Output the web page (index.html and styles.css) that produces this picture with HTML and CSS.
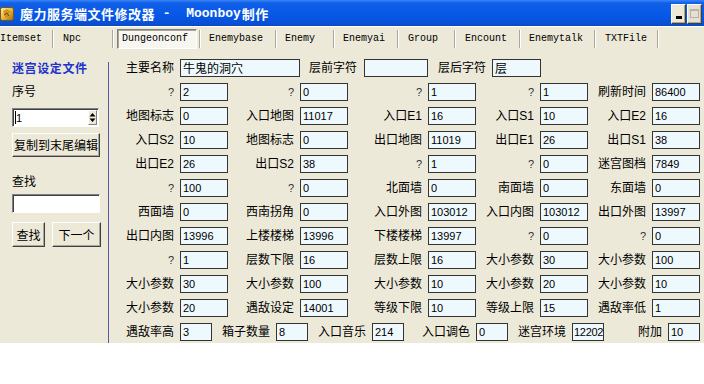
FILE: index.html
```html
<!DOCTYPE html>
<html>
<head>
<meta charset="utf-8">
<link rel="stylesheet" href="styles.css">
</head>
<body>
<div class="window">
  <div class="titlebar">
    <svg class="app-icon" width="14" height="15" viewBox="0 0 14 15">
      <defs>
        <linearGradient id="g" x1="0" y1="0" x2="1" y2="1">
          <stop offset="0" stop-color="#fff2a8"/>
          <stop offset="0.5" stop-color="#e6b83a"/>
          <stop offset="1" stop-color="#9a6a12"/>
        </linearGradient>
      </defs>
      <rect x="0.5" y="1.5" width="13" height="13" rx="2" fill="url(#g)" stroke="#7a5410"/>
      <path d="M3 5 L7 3 L11 6 L8 8 L10 12 L5 11 Z" fill="#c98a1c" opacity="0.8"/>
      <path d="M4 9 L7 7 L9 10" stroke="#6b4a0c" stroke-width="1" fill="none"/>
    </svg>
    <div class="title"><span class="cn">魔力服务端文件修改器</span><span class="mono"> -  Moonboy</span><span class="cn">制作</span></div>
    <div class="controls">
      <div class="ctl"><span class="min-bar"></span></div>
      <div class="ctl disabled"><span class="max-box"></span></div>
    </div>
  </div>

  <div class="tabs">
    <div class="tab t-itemset">Itemset</div><div class="sep"></div>
    <div class="tab t-npc">Npc</div><div class="sep"></div>
    <div class="tab t-dungeon"><div class="tab-active">Dungeonconf</div></div><div class="sep"></div>
    <div class="tab t-enemybase">Enemybase</div><div class="sep"></div>
    <div class="tab t-enemy">Enemy</div><div class="sep"></div>
    <div class="tab t-enemyai">Enemyai</div><div class="sep"></div>
    <div class="tab t-group">Group</div><div class="sep"></div>
    <div class="tab t-encount">Encount</div><div class="sep"></div>
    <div class="tab t-enemytalk">Enemytalk</div><div class="sep"></div>
    <div class="tab t-txt">TXTFile</div><div class="sep"></div>
  </div>

  <div class="content">
    <aside class="side">
      <div class="side-title">迷宫设定文件</div>
      <div class="side-label">序号</div>
      <div class="spin">
        <span class="spin-text"><span class="caret"></span>1</span>
        <span class="spin-btn">
          <svg width="7" height="11" viewBox="0 0 7 11"><polygon points="0.5,4.5 3.5,1 6.5,4.5" fill="#000"/><polygon points="0.5,6.5 3.5,10 6.5,6.5" fill="#000"/></svg>
        </span>
      </div>
      <button class="btn btn-wide">复制到末尾编辑</button>
      <div class="side-label find-label">查找</div>
      <div class="find-input"></div>
      <div class="btn-row">
        <button class="btn btn-find">查找</button>
        <button class="btn btn-next">下一个</button>
      </div>
    </aside>
    <div class="divider"></div>
    <main class="form">
      <div class="row-top">
        <span class="lbl lbl-first">主要名称</span>
        <span class="fld fld-name">牛鬼的洞穴</span>
        <span class="lbl lbl-pre">层前字符</span>
        <span class="fld fld-pre"></span>
        <span class="lbl lbl-post">层后字符</span>
        <span class="fld fld-post">层</span>
      </div>

      <div class="grid">
        <span class="lbl q">?</span><span class="fld">2</span>
        <span class="lbl q">?</span><span class="fld">0</span>
        <span class="lbl q">?</span><span class="fld">1</span>
        <span class="lbl q">?</span><span class="fld">1</span>
        <span class="lbl">刷新时间</span><span class="fld">86400</span>

        <span class="lbl">地图标志</span><span class="fld">0</span>
        <span class="lbl">入口地图</span><span class="fld">11017</span>
        <span class="lbl">入口E1</span><span class="fld">16</span>
        <span class="lbl">入口S1</span><span class="fld">10</span>
        <span class="lbl">入口E2</span><span class="fld">16</span>

        <span class="lbl">入口S2</span><span class="fld">10</span>
        <span class="lbl">地图标志</span><span class="fld">0</span>
        <span class="lbl">出口地图</span><span class="fld">11019</span>
        <span class="lbl">出口E1</span><span class="fld">26</span>
        <span class="lbl">出口S1</span><span class="fld">38</span>

        <span class="lbl">出口E2</span><span class="fld">26</span>
        <span class="lbl">出口S2</span><span class="fld">38</span>
        <span class="lbl q">?</span><span class="fld">1</span>
        <span class="lbl q">?</span><span class="fld">0</span>
        <span class="lbl">迷宫图档</span><span class="fld">7849</span>

        <span class="lbl q">?</span><span class="fld">100</span>
        <span class="lbl q">?</span><span class="fld">0</span>
        <span class="lbl">北面墙</span><span class="fld">0</span>
        <span class="lbl">南面墙</span><span class="fld">0</span>
        <span class="lbl">东面墙</span><span class="fld">0</span>

        <span class="lbl">西面墙</span><span class="fld">0</span>
        <span class="lbl">西南拐角</span><span class="fld">0</span>
        <span class="lbl">入口外图</span><span class="fld">103012</span>
        <span class="lbl">入口内图</span><span class="fld">103012</span>
        <span class="lbl">出口外图</span><span class="fld">13997</span>

        <span class="lbl">出口内图</span><span class="fld">13996</span>
        <span class="lbl">上楼楼梯</span><span class="fld">13996</span>
        <span class="lbl">下楼楼梯</span><span class="fld">13997</span>
        <span class="lbl q">?</span><span class="fld">0</span>
        <span class="lbl q">?</span><span class="fld">0</span>

        <span class="lbl q">?</span><span class="fld">1</span>
        <span class="lbl">层数下限</span><span class="fld">16</span>
        <span class="lbl">层数上限</span><span class="fld">16</span>
        <span class="lbl">大小参数</span><span class="fld">30</span>
        <span class="lbl">大小参数</span><span class="fld">100</span>

        <span class="lbl">大小参数</span><span class="fld">30</span>
        <span class="lbl">大小参数</span><span class="fld">100</span>
        <span class="lbl">大小参数</span><span class="fld">10</span>
        <span class="lbl">大小参数</span><span class="fld">20</span>
        <span class="lbl">大小参数</span><span class="fld">10</span>

        <span class="lbl">大小参数</span><span class="fld">20</span>
        <span class="lbl">遇敌设定</span><span class="fld">14001</span>
        <span class="lbl">等级下限</span><span class="fld">10</span>
        <span class="lbl">等级上限</span><span class="fld">15</span>
        <span class="lbl">遇敌率低</span><span class="fld">1</span>
      </div>

      <div class="row-bottom">
        <span class="lbl">遇敌率高</span><span class="fld">3</span>
        <span class="lbl">箱子数量</span><span class="fld">8</span>
        <span class="lbl">入口音乐</span><span class="fld">214</span>
        <span class="lbl">入口调色</span><span class="fld">0</span>
        <span class="lbl">迷宫环境</span><span class="fld fld-tight">12202</span>
        <span class="lbl">附加</span><span class="fld">10</span>
      </div>
    </main>
  </div>
</div>
</body>
</html>
```

FILE: styles.css
```css
* { box-sizing: border-box; }

body {
  margin: 0;
  background: #ffffff;
  font-family: "Liberation Sans", "Noto Sans CJK SC", sans-serif;
  font-size: 12px;
  color: #000;
}

.window {
  width: 704px;
  height: 343px;
  background: #ece9d8;
  display: flex;
  flex-direction: column;
}

/* Title bar */
.titlebar {
  height: 26px;
  background: linear-gradient(#3d86f8 0, #0f5fe9 3px, #0556e4 18px, #0a4fd2 24px, #0846bd 26px);
  display: flex;
  align-items: center;
  color: #fff;
}
.app-icon { margin-left: 0; margin-top: 1px; flex: none; }
.title {
  margin-left: 6px;
  font-weight: bold;
  font-size: 13px;
  white-space: pre;
  display: flex;
  align-items: center;
}
.title .cn {
  font-family: "Noto Sans CJK SC", sans-serif;
  letter-spacing: 0.5px;
}
.title .mono {
  font-family: "Liberation Mono", monospace;
  font-size: 13px;
  padding-right: 1px;
}
.controls {
  margin-left: auto;
  margin-right: 2px;
  display: flex;
  gap: 1px;
  align-self: flex-start;
  margin-top: 4px;
}
.ctl {
  width: 15px;
  height: 20px;
  background: #ece9d8;
  border: 1px solid;
  border-color: #ffffff #404040 #404040 #ffffff;
  box-shadow: inset -1px -1px 0 #aca899;
  display: flex;
  align-items: flex-end;
  justify-content: center;
}
.min-bar {
  width: 6px;
  height: 3px;
  background: #000;
  margin-bottom: 4px;
}
.ctl.disabled { background: #e4e1d2; }
.max-box {
  width: 9px;
  height: 9px;
  border: 1px solid #b8b4a4;
  border-top-width: 2px;
  margin-bottom: 5px;
}

/* Tabs */
.tabs {
  height: 24px;
  border-top: 1px solid #ffffff;
  display: flex;
  align-items: center;
  font-family: "Liberation Mono", monospace;
  font-size: 10px;
}
.tab {
  height: 20px;
  line-height: 20px;
  white-space: nowrap;
  flex: none;
}
.sep {
  width: 2px;
  height: 18px;
  border-left: 1px solid #aca899;
  border-right: 1px solid #ffffff;
  flex: none;
}
.t-itemset { width: 52px; padding-left: 0; }
.t-npc { width: 58px; padding-left: 9px; }
.t-dungeon { width: 85px; padding-left: 3px; }
.t-enemybase { width: 74px; padding-left: 8px; }
.t-enemy { width: 56px; padding-left: 8px; }
.t-enemyai { width: 62px; padding-left: 8px; }
.t-group { width: 55px; padding-left: 9px; }
.t-encount { width: 63px; padding-left: 9px; }
.t-enemytalk { width: 73px; padding-left: 8px; }
.t-txt { width: 61px; padding-left: 9px; }
.tab-active {
  width: 80px;
  height: 20px;
  line-height: 18px;
  padding-left: 4px;
  background: #f7f6f0;
  border: 1px solid;
  border-color: #808080 #ffffff #ffffff #808080;
  box-shadow: inset 1px 1px 0 #aca899;
}

/* Content */
.content {
  flex: 1;
  display: flex;
}

.side {
  width: 108px;
  padding: 10px 0 0 12px;
  display: flex;
  flex-direction: column;
  align-items: flex-start;
  font-family: "Noto Sans CJK SC", sans-serif;
}
.side-title {
  height: 16px;
  line-height: 16px;
  color: #2233cc;
  font-weight: bold;
  letter-spacing: 0.6px;
}
.side-label {
  height: 16px;
  line-height: 16px;
  margin-top: 7px;
}
.spin {
  margin-top: 9px;
  width: 87px;
  height: 19px;
  background: #fff;
  border: 1px solid;
  border-color: #808080 #ffffff #ffffff #808080;
  box-shadow: inset 1px 1px 0 #404040;
  display: flex;
  align-items: center;
  justify-content: space-between;
}
.spin-text {
  font-family: "Liberation Sans", sans-serif;
  font-size: 11px;
  padding-left: 2px;
  display: flex;
  align-items: center;
}
.caret {
  width: 1px;
  height: 13px;
  background: #000;
  margin-right: 0;
}
.spin-btn {
  width: 9px;
  height: 15px;
  margin-right: 1px;
  background: #ece9d8;
  border: 1px solid;
  border-color: #ffffff #808080 #808080 #ffffff;
  display: flex;
  align-items: center;
  justify-content: center;
}
.btn {
  font-family: "Noto Sans CJK SC", sans-serif;
  font-size: 12px;
  color: #000;
  background: #ece9d8;
  border: 1px solid;
  border-color: #ffffff #404040 #404040 #ffffff;
  box-shadow: inset -1px -1px 0 #aca899;
  padding: 0;
  margin: 0;
  line-height: 20px;
}
.btn-wide {
  margin-top: 6px;
  width: 88px;
  height: 24px;
}
.find-label { margin-top: 16px; }
.find-input {
  margin-top: 5px;
  width: 88px;
  height: 19px;
  background: #fff;
  border: 1px solid;
  border-color: #808080 #ffffff #ffffff #808080;
  box-shadow: inset 1px 1px 0 #404040;
}
.btn-row {
  margin-top: 9px;
  display: flex;
  gap: 7px;
}
.btn-find { width: 33px; height: 25px; }
.btn-next { width: 49px; height: 25px; }

.divider {
  width: 1px;
  margin-top: 12px;
  background: #5a5aa6;
  flex: none;
}

.form {
  margin-left: 1px;
  padding-top: 9px;
  width: 590px;
}

.lbl {
  display: block;
  text-align: right;
  padding-right: 6px;
  line-height: 18px;
  height: 18px;
  white-space: nowrap;
}
.lbl.q {
  font-size: 11px;
  color: #333;
}
.fld {
  display: block;
  height: 18px;
  border: 1px solid #333333;
  background: #eef9fd;
  font-size: 11px;
  line-height: 16px;
  padding-left: 2px;
  white-space: nowrap;
  overflow: hidden;
}
.fld-tight {
  padding-left: 1px;
  letter-spacing: -0.3px;
}

.row-top {
  display: flex;
  height: 18px;
}
.row-top .lbl { padding-right: 0; }
.lbl-first { width: 64px; margin-right: 6px; }
.fld-name { width: 120px; font-size: 12px; font-family: "Noto Sans CJK SC", sans-serif; }
.lbl-pre { width: 48px; margin-left: 9px; margin-right: 7px; }
.fld-pre { width: 64px; }
.lbl-post { width: 48px; margin-left: 10px; margin-right: 6px; }
.fld-post { width: 49px; font-size: 12px; font-family: "Noto Sans CJK SC", sans-serif; }

.grid {
  margin-top: 6px;
  display: grid;
  grid-template-columns: 70px 48px 72px 48px 80px 48px 64px 48px 64px 48px;
  grid-auto-rows: 18px;
  row-gap: 6px;
}

.row-bottom {
  margin-top: 6px;
  display: grid;
  grid-template-columns: 70px 32px 64px 32px 64px 32px 72px 32px 64px 32px 64px 32px;
  grid-auto-rows: 18px;
}
```
